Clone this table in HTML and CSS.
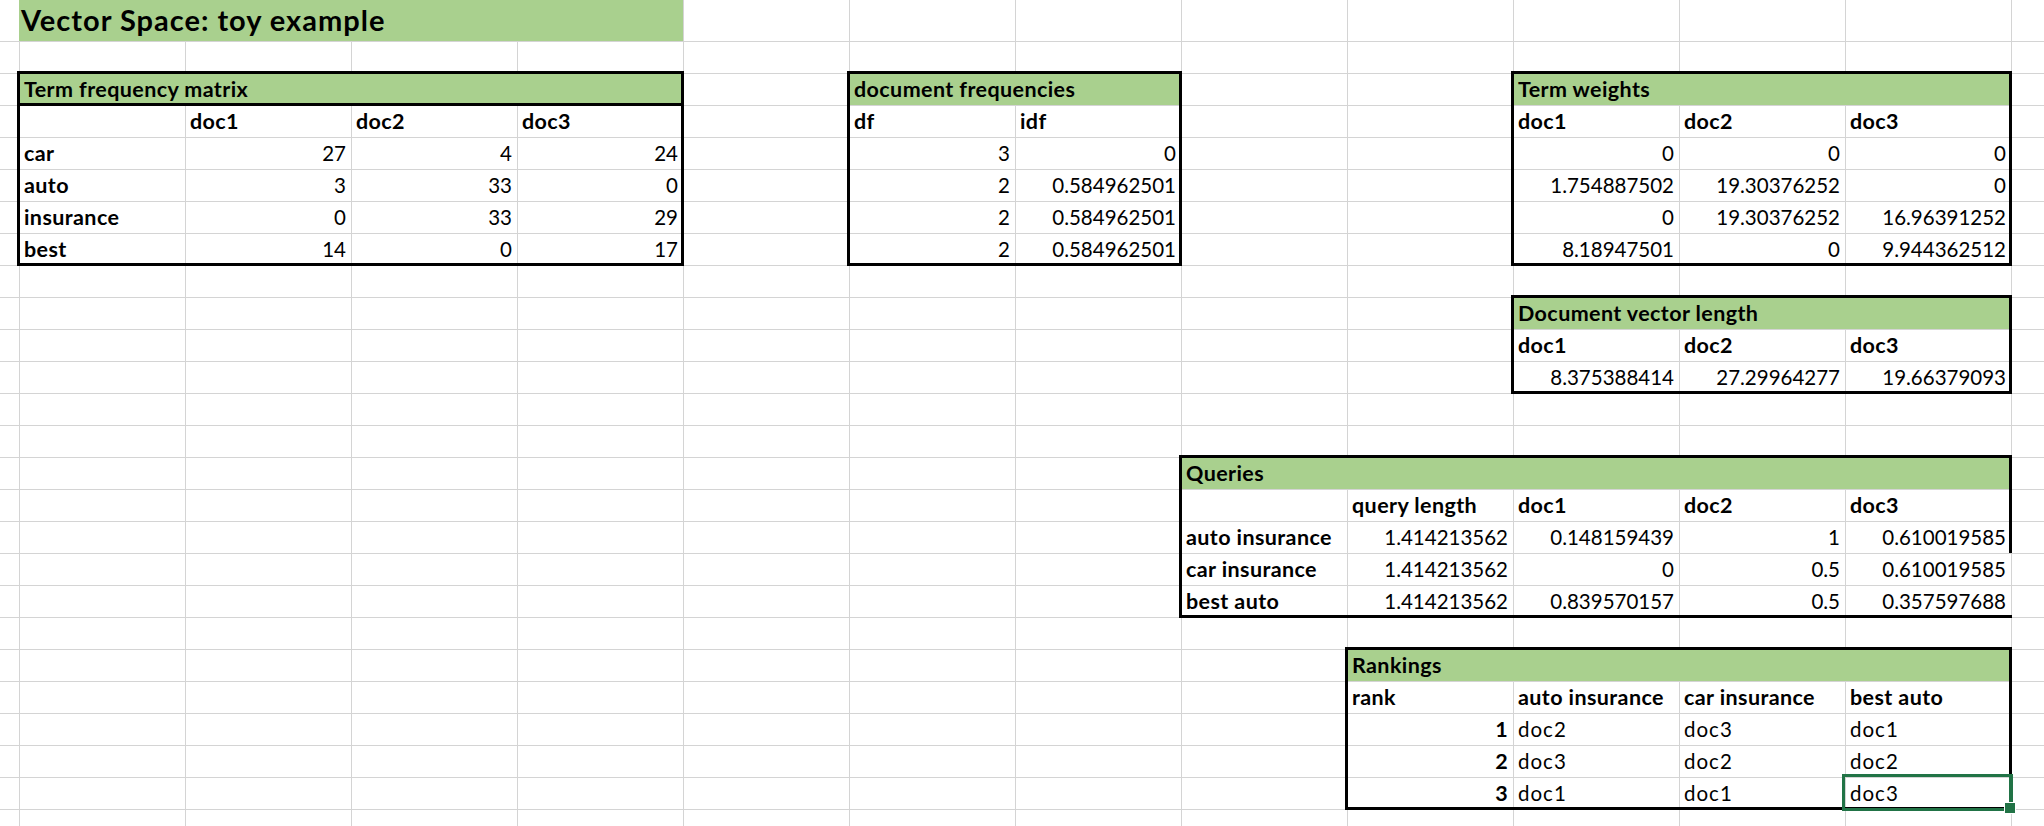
FILE: index.html
```html
<!DOCTYPE html>
<html lang="en">
<head>
<meta charset="utf-8">
<title>Vector Space: toy example</title>
<link rel="stylesheet" href="styles.css">
</head>
<body>
<div class="sheet">
  <div class="title">Vector Space: toy example</div>

  <div class="tbl tf">
    <div class="c hd hd-line">Term frequency matrix</div>
    <div class="c"></div><div class="c b">doc1</div><div class="c b">doc2</div><div class="c b">doc3</div>
    <div class="c b">car</div><div class="c r">27</div><div class="c r">4</div><div class="c r">24</div>
    <div class="c b">auto</div><div class="c r">3</div><div class="c r">33</div><div class="c r">0</div>
    <div class="c b">insurance</div><div class="c r">0</div><div class="c r">33</div><div class="c r">29</div>
    <div class="c b">best</div><div class="c r">14</div><div class="c r">0</div><div class="c r">17</div>
  </div>

  <div class="tbl df">
    <div class="c hd">document frequencies</div>
    <div class="c b">df</div><div class="c b">idf</div>
    <div class="c r">3</div><div class="c r">0</div>
    <div class="c r">2</div><div class="c r">0.584962501</div>
    <div class="c r">2</div><div class="c r">0.584962501</div>
    <div class="c r">2</div><div class="c r">0.584962501</div>
  </div>

  <div class="tbl tw">
    <div class="c hd">Term weights</div>
    <div class="c b">doc1</div><div class="c b">doc2</div><div class="c b">doc3</div>
    <div class="c r">0</div><div class="c r">0</div><div class="c r">0</div>
    <div class="c r">1.754887502</div><div class="c r">19.30376252</div><div class="c r">0</div>
    <div class="c r">0</div><div class="c r">19.30376252</div><div class="c r">16.96391252</div>
    <div class="c r">8.18947501</div><div class="c r">0</div><div class="c r">9.944362512</div>
  </div>

  <div class="tbl dvl">
    <div class="c hd">Document vector length</div>
    <div class="c b">doc1</div><div class="c b">doc2</div><div class="c b">doc3</div>
    <div class="c r">8.375388414</div><div class="c r">27.29964277</div><div class="c r">19.66379093</div>
  </div>

  <div class="tbl qr">
    <div class="c hd">Queries</div>
    <div class="c"></div><div class="c b">query length</div><div class="c b">doc1</div><div class="c b">doc2</div><div class="c b">doc3</div>
    <div class="c b">auto insurance</div><div class="c r">1.414213562</div><div class="c r">0.148159439</div><div class="c r">1</div><div class="c r">0.610019585</div>
    <div class="c b">car insurance</div><div class="c r">1.414213562</div><div class="c r">0</div><div class="c r">0.5</div><div class="c r">0.610019585</div>
    <div class="c b">best auto</div><div class="c r">1.414213562</div><div class="c r">0.839570157</div><div class="c r">0.5</div><div class="c r">0.357597688</div>
  </div>

  <div class="tbl rk">
    <div class="c hd">Rankings</div>
    <div class="c b">rank</div><div class="c b">auto insurance</div><div class="c b">car insurance</div><div class="c b">best auto</div>
    <div class="c b r">1</div><div class="c t">doc2</div><div class="c t">doc3</div><div class="c t">doc1</div>
    <div class="c b r">2</div><div class="c t">doc3</div><div class="c t">doc2</div><div class="c t">doc2</div>
    <div class="c b r">3</div><div class="c t">doc1</div><div class="c t">doc1</div><div class="c t sel">doc3</div>
  </div>
</div>
</body>
</html>
```

FILE: styles.css
```css
html, body {
  margin: 0;
  padding: 0;
  background: #fff;
}

body {
  font-family: Lato, "Open Sans", "Liberation Sans", sans-serif;
  color: #000;
}

.sheet {
  display: grid;
  grid-template-columns: 19px repeat(12, 166px) 1fr;
  grid-template-rows: 41px repeat(24, 32px) 1fr;
  width: 2044px;
  height: 826px;
  overflow: hidden;
  background-image:
    linear-gradient(to right, #d4d4d4 1px, transparent 1px),
    linear-gradient(#fff, #fff),
    linear-gradient(to bottom, #d4d4d4 1px, transparent 1px);
  background-size: 166px 100%, 100% 41px, 100% 32px;
  background-position: 19px 0, 0 0, 0 41px;
  background-repeat: repeat-x, no-repeat, repeat;
}

.title {
  grid-column: 2 / 6;
  grid-row: 1;
  background: #a9d08e;
  font-weight: 700;
  font-size: 29px;
  letter-spacing: 1px;
  line-height: 34px;
  display: flex;
  align-items: flex-end;
  padding: 0 0 4px 2px;
  white-space: nowrap;
}

.tbl {
  position: relative;
  display: grid;
  grid-auto-rows: 32px;
}

.tbl::after {
  content: "";
  position: absolute;
  top: -2px;
  left: -2px;
  right: -1px;
  bottom: -1px;
  border: 3px solid #000;
  pointer-events: none;
  z-index: 1;
}

.tf {
  grid-column: 2 / 6;
  grid-row: 3 / 9;
  grid-template-columns: repeat(4, 1fr);
}

.df {
  grid-column: 7 / 9;
  grid-row: 3 / 9;
  grid-template-columns: repeat(2, 1fr);
}

.tw {
  grid-column: 11 / 14;
  grid-row: 3 / 9;
  grid-template-columns: repeat(3, 1fr);
}

.dvl {
  grid-column: 11 / 14;
  grid-row: 10 / 13;
  grid-template-columns: repeat(3, 1fr);
}

.qr {
  grid-column: 9 / 14;
  grid-row: 15 / 20;
  grid-template-columns: repeat(5, 1fr);
}

.qr::after {
  border-right-width: 0;
}

.qr::before {
  content: "";
  position: absolute;
  top: -2px;
  right: -1px;
  width: 3px;
  height: 98px;
  background: #000;
  z-index: 1;
}

.rk {
  grid-column: 10 / 14;
  grid-row: 21 / 26;
  grid-template-columns: repeat(4, 1fr);
}

.c {
  display: flex;
  align-items: flex-end;
  padding: 0 5px 4px 5px;
  font-size: 20.5px;
  line-height: 24px;
  white-space: nowrap;
  min-width: 0;
}

.hd {
  grid-column: 1 / -1;
  background: #a9d08e;
}

.hd,
.b {
  font-weight: 700;
  font-size: 21.5px;
  letter-spacing: 0.4px;
}

.t {
  letter-spacing: 1px;
}

.hd-line {
  box-shadow: inset 0 -2px 0 #000, 0 1px 0 #000;
}

.r {
  justify-content: flex-end;
}

.sel {
  position: relative;
}

.sel::after {
  content: "";
  position: absolute;
  top: -3px;
  left: -3px;
  right: -2px;
  bottom: -2px;
  border: 3px solid #217346;
  border-right-width: 4px;
  z-index: 2;
}

.sel::before {
  content: "";
  position: absolute;
  right: -5px;
  bottom: -5px;
  width: 10px;
  height: 10px;
  background: #217346;
  border: 1px solid #fff;
  z-index: 3;
}
```
